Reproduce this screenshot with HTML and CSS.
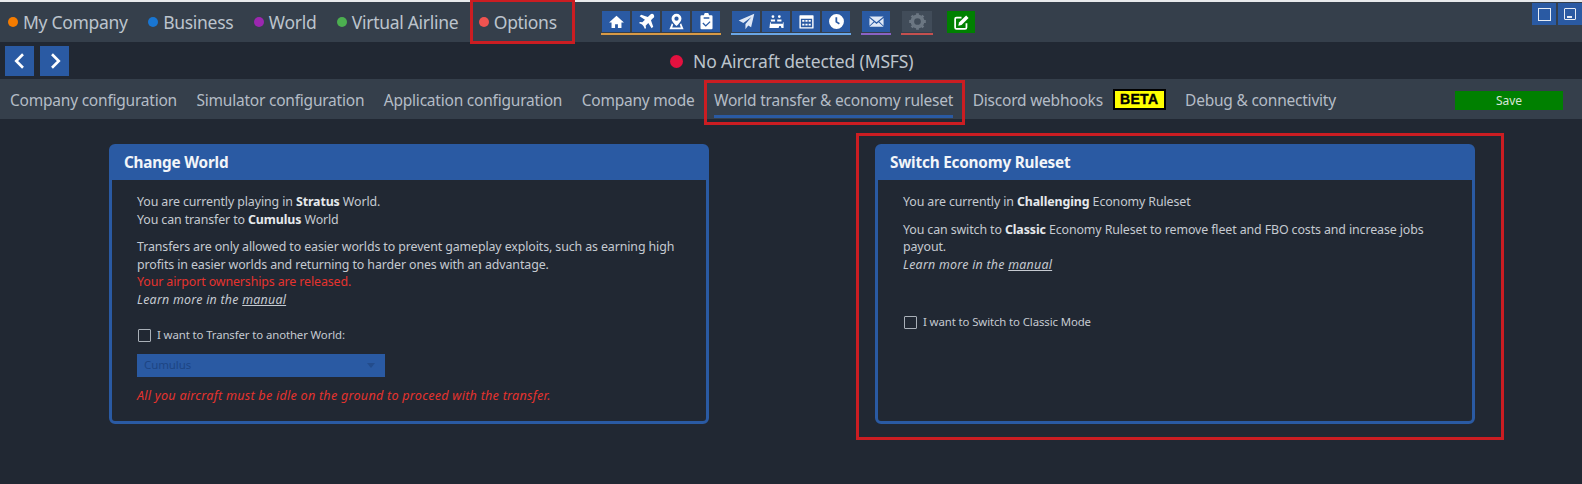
FILE: index.html
```html
<!DOCTYPE html>
<html lang="en">
<head>
<meta charset="utf-8">
<title>Options</title>
<link rel="stylesheet" href="styles.css">
</head>
<body>
<div class="app">
  <header class="topbar">
    <nav class="mainnav">
      <a class="mainlink"><i class="dot orange"></i>My Company</a>
      <a class="mainlink"><i class="dot blue"></i>Business</a>
      <a class="mainlink"><i class="dot purple"></i>World</a>
      <a class="mainlink"><i class="dot green"></i>Virtual Airline</a>
      <a class="mainlink"><i class="dot red"></i>Options</a>
    </nav>
    <div class="toolgroups">
      <div class="toolgroup u-orange">
        <span class="tool"><svg viewBox="0 0 24 24"><path d="M12 4 1.500 13.500H5V21h5v-5h4v5h5v-7.500h3.500z"/></svg></span>
        <span class="tool"><svg viewBox="0 0 24 24"><path d="M22 2c-1.300-1.300-3.500-1-4.800.3L13.800 5.700 4.500 2.500 2.300 4.700l7.500 4.800-3.700 3.700-3.200-.5L1.400 14.200l4.300 2.100 2 2 2.100 4.300 1.500-1.500-.5-3.200 3.700-3.700 4.800 7.500 2.200-2.200-3.200-9.300 3.400-3.400C23 7.500 23.300 3.300 22 2z"/></svg></span>
        <span class="tool"><svg viewBox="0 0 24 24"><path fill-rule="evenodd" d="M12 1a7 7 0 0 0-7 7c0 3.500 4 7.500 7 10.500 3-3 7-7 7-10.500a7 7 0 0 0-7-7zm0 4a3 3 0 1 1 0 6 3 3 0 0 1 0-6z"/><path d="M5.500 14.500 2 23h20l-3.500-8.500-1.800 1.800 1.300 4.200H6l1.300-4.200z"/></svg></span>
        <span class="tool"><svg viewBox="0 0 24 24"><path fill-rule="evenodd" d="M5 3h3.500a3.500 3.500 0 0 1 7 0H19a1.500 1.500 0 0 1 1.500 1.500v17A1.500 1.500 0 0 1 19 23H5a1.500 1.500 0 0 1-1.500-1.500v-17A1.500 1.500 0 0 1 5 3zm3 3v2h8V6zm8.500 5.500L11 17l-3.500-3.500-1.300 1.300L11 19.500l6.800-6.700z"/></svg></span>
      </div>
      <div class="toolgroup u-sky">
        <span class="tool"><svg viewBox="0 0 24 24"><path class="soft" d="M23 1 1 10.500l6.500 3.500L19 5.500 10.500 15.500V23l4-5.500 4 2.500z"/></svg></span>
        <span class="tool"><svg viewBox="0 0 24 24"><path d="M7 3a2 2 0 1 1 0 4 2 2 0 0 1 0-4zm9 0a2 2 0 1 1 0 4 2 2 0 0 1 0-4zM4 9h6v3H4zm9 0h6v3h-6zM3 13h1v2h17v-2h1v8h-3l-1-2.500h-2L15 21H2z"/></svg></span>
        <span class="tool"><svg viewBox="0 0 24 24"><path fill-rule="evenodd" d="M3 3h18a1 1 0 0 1 1 1v17a1 1 0 0 1-1 1H3a1 1 0 0 1-1-1V4a1 1 0 0 1 1-1zm1 5v12h16V8zm2 2h3v2.500H6zm4.500 0h3v2.500h-3zm4.500 0h3v2.500h-3zM6 15h3v2.500H6zm4.500 0h3v2.500h-3zm4.500 0h3v2.500h-3z"/></svg></span>
        <span class="tool"><svg viewBox="0 0 24 24"><path fill-rule="evenodd" d="M12 1.500a10.500 10.500 0 1 1 0 21 10.500 10.500 0 0 1 0-21zM10.500 6v7.200l5 3 1.200-2-3.700-2.200V6z"/></svg></span>
      </div>
      <div class="toolgroup u-purple">
        <span class="tool"><svg viewBox="0 0 24 24"><path class="soft" d="M2 5h20l-10 8zM2 7l6 5-6 6zm20 0v11l-6-6zM9 13l3 2.500 3-2.500 7 6.500H2z"/></svg></span>
      </div>
      <div class="toolgroup u-red">
        <span class="tool gear"><svg viewBox="0 0 24 24"><circle class="ring" cx="12" cy="12" r="6.500"/><path class="teeth" d="M12 1.500v4M12 18.500v4M1.500 12h4M18.500 12h4M4.600 4.600l2.800 2.800M16.600 16.600l2.800 2.800M4.600 19.400l2.800-2.800M16.600 7.400l2.800-2.800"/></svg></span>
      </div>
      <div class="toolgroup plain">
        <span class="tool go"><svg viewBox="0 0 24 24"><path class="outline" d="M12 5H5a2 2 0 0 0-2 2v12a2 2 0 0 0 2 2h12a2 2 0 0 0 2-2v-6"/><path d="m18.500 2 3.500 3.500L12 15.500l-4.500 1 1-4.500z"/></svg></span>
      </div>
    </div>
    <div class="winbtns">
      <span class="winbtn"><i class="winbox"></i></span>
      <span class="winbtn"><i class="winbox small"><i class="winmark"></i></i></span>
    </div>
  </header>

  <div class="statusbar">
    <div class="arrows">
      <span class="arrow"><svg viewBox="0 0 24 24"><path d="M16 3 7 12l9 9"/></svg></span>
      <span class="arrow"><svg viewBox="0 0 24 24"><path d="m8 3 9 9-9 9"/></svg></span>
    </div>
    <div class="status"><i class="statusdot"></i>No Aircraft detected (MSFS)</div>
  </div>

  <div class="tabs">
    <a class="tab">Company configuration</a>
    <a class="tab">Simulator configuration</a>
    <a class="tab">Application configuration</a>
    <a class="tab">Company mode</a>
    <a class="tab active">World transfer &amp; economy ruleset</a>
    <a class="tab">Discord webhooks<span class="beta">BETA</span></a>
    <a class="tab">Debug &amp; connectivity</a>
    <button class="save">Save</button>
  </div>

  <main class="cards">
    <section class="card">
      <h2 class="cardhead">Change World</h2>
      <div class="cardbody">
        <p>You are currently playing in <b>Stratus</b> World.<br>You can transfer to <b>Cumulus</b> World</p>
        <p>Transfers are only allowed to easier worlds to prevent gameplay exploits, such as earning high profits in easier worlds and returning to harder ones with an advantage.<br><span class="warn">Your airport ownerships are released.</span><br><em>Learn more in the <u>manual</u></em></p>
        <label class="check first"><i class="box"></i>I want to Transfer to another World:</label>
        <div class="select">Cumulus<i class="caret"></i></div>
        <p class="warn notice"><em>All you aircraft must be idle on the ground to proceed with the transfer.</em></p>
      </div>
    </section>
    <section class="card">
      <h2 class="cardhead">Switch Economy Ruleset</h2>
      <div class="cardbody">
        <p>You are currently in <b>Challenging</b> Economy Ruleset</p>
        <p>You can switch to <b>Classic</b> Economy Ruleset to remove fleet and FBO costs and increase jobs payout.<br><em>Learn more in the <u>manual</u></em></p>
        <label class="check second"><i class="box"></i>I want to Switch to Classic Mode</label>
      </div>
    </section>
  </main>

  <i class="mark m1"></i>
  <i class="mark m2"></i>
  <i class="mark m3"></i>
</div>
</body>
</html>
```

FILE: styles.css
```css
* { box-sizing: border-box; }
html, body { margin: 0; padding: 0; }
body {
  width: 1582px;
  height: 484px;
  overflow: hidden;
  background: #212833;
  font-family: "Noto Sans", "Open Sans", sans-serif;
  color: #d3d7dc;
}
.app { position: relative; height: 484px; border-top: 2px solid #e8eaec; }

.topbar {
  display: flex;
  align-items: flex-start;
  height: 40px;
  background: #353f4b;
  position: relative;
}
.mainnav { display: flex; padding: 8px 0 0 8px; width: 601px; }
.mainlink {
  display: flex;
  align-items: center;
  font-size: 17.5px;
  line-height: 24px;
  letter-spacing: -.3px;
  color: #bcc4cd;
  margin-right: 20.5px;
  white-space: nowrap;
}
.dot { width: 10px; height: 10px; border-radius: 50%; margin-right: 5px; }
.orange { background: #f57c00; }
.blue { background: #1976d2; }
.purple { background: #9c27b0; }
.green { background: #4caf50; }
.red { background: #ef5350; }

.toolgroups { display: flex; padding-top: 9px; }
.toolgroup { display: flex; gap: 2px; height: 24px; border-bottom: 2px solid transparent; margin-right: 10px; padding: 0 1px; }
.toolgroup.plain { margin-left: 4px; padding: 0; border: 0; }
.u-orange { border-color: #d89a45; }
.u-sky { border-color: #6aa6e6; }
.u-purple { border-color: #8a62c4; }
.u-red { border-color: #c4504f; }
.tool {
  width: 28px;
  height: 21px;
  background: #2a5aa3;
  display: flex;
  align-items: center;
  justify-content: center;
}
.tool svg { width: 17px; height: 17px; fill: #fff; }
.tool .soft { fill: #dfe8f6; }
.tool.gear { background: #414c59; width: 30px; }
.tool.gear svg { width: 19px; height: 19px; }
.ring { fill: none; stroke: #6b7682; stroke-width: 4.5; }
.teeth { fill: none; stroke: #6b7682; stroke-width: 3.5; }
.tool.go { background: #008000; height: 22px; }
.tool.go .outline { fill: none; stroke: #fff; stroke-width: 2.5; }

.winbtns { position: absolute; top: 1px; right: 0; display: flex; gap: 2px; }
.winbtn { width: 24px; height: 22px; background: #2a5aa3; display: flex; align-items: center; justify-content: center; }
.winbox { width: 13px; height: 13px; border: 1.5px solid #e6ecf5; display: block; position: relative; }
.winbox.small { width: 12px; height: 12px; border-radius: 1px; }
.winmark { position: absolute; left: 2px; bottom: 1px; width: 5px; height: 2px; background: #e6ecf5; }

.statusbar { height: 37px; display: flex; align-items: center; position: relative; }
.arrows { display: flex; gap: 6px; padding-left: 5px; }
.arrow { width: 29px; height: 30px; background: #2a5aa3; display: flex; align-items: center; justify-content: center; }
.arrow svg { width: 18px; height: 18px; fill: none; stroke: #fff; stroke-width: 3.5; }
.status {
  position: absolute;
  left: 670px;
  top: 7px;
  display: flex;
  align-items: center;
  font-size: 17.5px;
  line-height: 24px;
  letter-spacing: -.15px;
  color: #bcc4cd;
}
.statusdot { width: 13px; height: 13px; border-radius: 50%; background: #e3113f; margin-right: 10px; }

.tabs { height: 40px; background: #353f4b; display: flex; align-items: flex-start; padding-left: 10px; position: relative; }
.tab {
  height: 39px;
  font-size: 15.5px;
  line-height: 24px;
  padding-top: 9px;
  letter-spacing: -.22px;
  color: #b4bcc6;
  margin-right: 19.5px;
  white-space: nowrap;
  display: flex;
  align-items: flex-start;
}
.tab.active { border-bottom: 3px solid #2a5aa3; }
.beta {
  font: 900 14px/17px "Liberation Sans", sans-serif;
  -webkit-text-stroke: .4px #000;
  letter-spacing: .4px;
  background: #ff0;
  color: #000;
  border: 2px solid #000;
  padding: 0 5px;
  margin: 1px 0 0 10px;
}
.save {
  position: absolute;
  left: 1455px;
  top: 12px;
  width: 108px;
  height: 19px;
  border: 0;
  background: #008000;
  color: #d8e6d8;
  font: 12px/19px "Noto Sans", sans-serif;
  padding: 0;
}

.cards { display: flex; padding: 25px 0 0 109px; gap: 166px; }
.card { width: 600px; height: 280px; border: 3px solid #2a5aa3; border-radius: 6px; }
.cardhead {
  margin: 0;
  height: 33px;
  background: #2a5aa3;
  color: #f2f5f9;
  font-size: 15.3px;
  font-weight: 700;
  line-height: 31px;
  letter-spacing: -.2px;
  padding-left: 12px;
}
.cardbody { padding: 13px 25px 0; font-size: 12.4px; line-height: 17.5px; letter-spacing: -.11px; color: #c5cad1; }
.cardbody p { margin: 0 0 10px; }
.cardbody b { color: #e6e9ec; }
.cardbody em { letter-spacing: .25px; }
.warn { color: #e5332e; }
.check { display: flex; align-items: center; font-size: 11.4px; height: 20px; }
.check.first { margin-top: 17px; }
.check.second { margin-top: 39px; }
.box { width: 13px; height: 13px; border: 1px solid #a9b0b8; margin: 0 6px 0 1px; border-radius: 1px; }
.select {
  width: 248px;
  height: 23px;
  margin: 9px 0 10px;
  background: #2a5aa3;
  color: #1d4583;
  font-size: 11.5px;
  padding-left: 7px;
  line-height: 21px;
  position: relative;
}
.caret { position: absolute; right: 10px; top: 9px; border: 4px solid transparent; border-top: 5px solid #234c8c; border-bottom: 0; }
.cardbody .notice { margin: 0; font-size: 12.6px; }

.mark { position: absolute; border: 3px solid #cb1d22; pointer-events: none; }
.m1 { left: 470px; top: -2px; width: 105px; height: 44px; border-top-width: 2px; }
.m2 { left: 704px; top: 78px; width: 261px; height: 45px; }
.m3 { left: 856px; top: 131px; width: 648px; height: 307px; }
```
